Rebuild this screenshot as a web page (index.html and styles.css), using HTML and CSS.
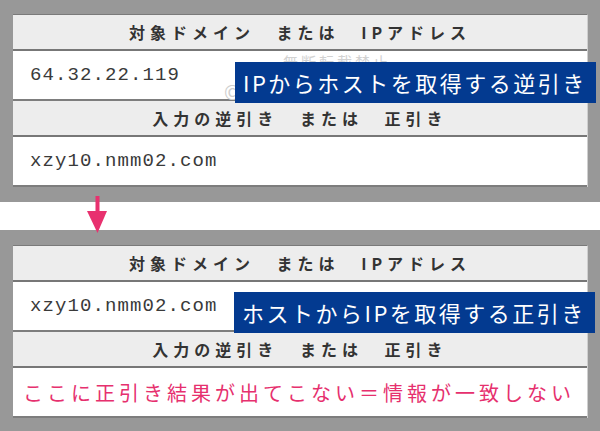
FILE: index.html
```html
<!DOCTYPE html>
<html lang="ja">
<head>
    <meta charset="UTF-8">
    <meta name="viewport" content="width=device-width, initial-scale=1.0">
    <title>逆引きと正引き</title>
    <link rel="stylesheet" href="styles.css">
</head>
<body>
    <section class="panel">
        <div class="lookup">
            <div class="lookup-head">対象ドメイン または IPアドレス</div>
            <div class="lookup-value">
                <span class="mono">64.32.22.119</span>
                <span class="stamp">無断転載禁止</span>
                <span class="stamp-mark">©</span>
                <span class="tag">IPからホストを取得する逆引き</span>
            </div>
            <div class="lookup-head">入力の逆引き または 正引き</div>
            <div class="lookup-value">
                <span class="mono">xzy10.nmm02.com</span>
            </div>
        </div>
    </section>

    <div class="divider">
        <svg class="arrow" width="24" height="38" viewBox="0 0 24 38">
            <rect x="9.5" y="0" width="4" height="20" fill="#e8316f"/>
            <polygon points="1,15 21,15 11.5,37" fill="#e8316f"/>
        </svg>
    </div>

    <section class="panel panel-second">
        <div class="lookup">
            <div class="lookup-head">対象ドメイン または IPアドレス</div>
            <div class="lookup-value">
                <span class="mono">xzy10.nmm02.com</span>
                <span class="tag tag-second">ホストからIPを取得する正引き</span>
            </div>
            <div class="lookup-head">入力の逆引き または 正引き</div>
            <div class="lookup-value">
                <span class="result">ここに正引き結果が出てこない＝情報が一致しない</span>
            </div>
        </div>
    </section>
</body>
</html>
```

FILE: styles.css
```css
body {
    background-color: #989898;
    font-family: "Noto Sans CJK JP", sans-serif;
    margin: 0;
    padding: 0;
}

.panel {
    padding: 14px 12px 15px 13px;
}

.panel-second {
    padding-top: 15px;
}

.lookup {
    border-top: 1px solid #7a7a7a;
    border-right: 1px solid #cfcfcf;
}

.lookup-head {
    height: 34px;
    line-height: 34px;
    background-color: #ededed;
    border-bottom: 2px solid #777;
    text-align: center;
    font-size: 16px;
    font-weight: bold;
    letter-spacing: 5px;
    word-spacing: 13px;
    color: #333;
}

.lookup-value {
    position: relative;
    height: 48px;
    background-color: #fff;
    border-bottom: 2px solid #7d7d7d;
    display: flex;
    align-items: center;
    padding-left: 17px;
}

.mono {
    font-family: "Liberation Mono", monospace;
    font-size: 19px;
    letter-spacing: 1.1px;
    color: #3a3a3a;
}

.result {
    margin-left: -7px;
    font-size: 20px;
    letter-spacing: 4px;
    color: #e6306e;
}

/* faint copyright stamp under the tag */
.stamp {
    position: absolute;
    left: 270px;
    top: 0;
    font-size: 15px;
    letter-spacing: 3px;
    color: #d2d2d2;
}

.stamp-mark {
    position: absolute;
    left: 211px;
    top: 26px;
    font-size: 20px;
    color: #cfcfcf;
}

.tag {
    position: absolute;
    left: 222px;
    top: 11px;
    width: 353px;
    height: 41px;
    padding-left: 8px;
    background-color: #033a90;
    color: #fff;
    font-size: 22px;
    letter-spacing: 2.5px;
    line-height: 41px;
    white-space: nowrap;
    overflow: hidden;
    z-index: 2;
}

.tag-second {
    left: 221px;
    top: 10px;
}

.divider {
    position: relative;
    height: 28px;
    background-color: #fff;
}

.arrow {
    position: absolute;
    left: 86px;
    top: -6px;
}
```
